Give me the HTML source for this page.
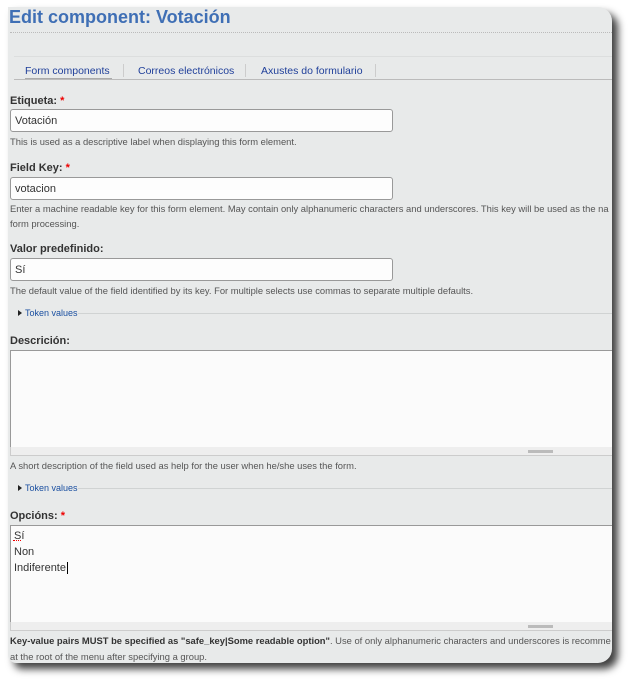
<!DOCTYPE html>
<html><head><style>
body{margin:0;width:635px;height:687px;background:#fff;position:relative;overflow:hidden;font-family:"Liberation Sans",sans-serif;}
#p{position:absolute;left:8px;top:7px;width:604px;height:656px;background:#e8eaea;border-radius:0 14px 14px 8px;box-shadow:6px 6px 8px rgba(0,0,0,.75);overflow:hidden;}
.a{position:absolute;white-space:nowrap;}
.t{font-size:18px;font-weight:bold;color:#3f6fb5;left:1px;top:0px;}
.lb{font-size:11px;font-weight:bold;color:#333;left:2px;}
.lb b{color:#e00;}
.h{font-size:9.4px;color:#555;left:2px;}
.in{left:2px;background:#fdfdfd;border:1px solid #999;border-radius:3px;font-size:11px;color:#333;line-height:23px;padding-left:4px;box-sizing:border-box;width:383px;height:23px;}
.ta{left:2px;width:610px;background:#fbfbfb;border:1px solid #999;box-sizing:border-box;}
.gr{left:2px;width:610px;height:9px;background:#eee;border:1px solid #ccc;border-top:none;box-sizing:border-box;}
.gr i{position:absolute;left:517px;top:3px;width:25px;height:3px;background:#bbb;}
.tk{font-size:9px;color:#1a4fa0;left:10px;}
.tk:before{content:"";display:inline-block;border-left:4px solid #222;border-top:3.5px solid transparent;border-bottom:3.5px solid transparent;margin-right:3px;}
.ln{height:1px;background:#d0d3d3;}
.tab{font-size:10.5px;color:#1f3f9a;top:58px;}
</style></head><body>
<div id="p">
<div class="a t">Edit component: Votación</div>
<div class="a" style="left:2px;top:25px;width:604px;border-top:1px dotted #bbb"></div>
<div class="a ln" style="left:6px;top:49px;width:600px;background:#dcdede"></div>
<div class="a tab" style="left:17px">Form components</div>
<div class="a" style="left:17px;top:71px;width:87px;height:2px;background:#aaa"></div>
<div class="a" style="left:115px;top:57px;width:1px;height:13px;background:#ccc"></div>
<div class="a tab" style="left:130px">Correos electrónicos</div>
<div class="a" style="left:237px;top:57px;width:1px;height:13px;background:#ccc"></div>
<div class="a tab" style="left:253px">Axustes do formulario</div>
<div class="a" style="left:367px;top:57px;width:1px;height:13px;background:#ccc"></div>
<div class="a" style="left:6px;top:72px;width:600px;height:1px;background:#bbb"></div>

<div class="a lb" style="top:88px">Etiqueta: <b>*</b></div>
<div class="a in" style="top:102px">Votación</div>
<div class="a h" style="top:129px">This is used as a descriptive label when displaying this form element.</div>

<div class="a lb" style="top:155px">Field Key: <b>*</b></div>
<div class="a in" style="top:170px">votacion</div>
<div class="a h" style="top:196px">Enter a machine readable key for this form element. May contain only alphanumeric characters and underscores. This key will be used as the na</div>
<div class="a h" style="top:211px">form processing.</div>

<div class="a lb" style="top:236px">Valor predefinido:</div>
<div class="a in" style="top:251px">Sí</div>
<div class="a h" style="top:278px">The default value of the field identified by its key. For multiple selects use commas to separate multiple defaults.</div>

<div class="a tk" style="top:301px">Token values</div>
<div class="a ln" style="left:70px;top:306px;width:540px"></div>

<div class="a lb" style="top:328px">Descrición:</div>
<div class="a ta" style="top:343px;height:98px"></div>
<div class="a gr" style="top:440px"><i></i></div>
<div class="a h" style="top:453px">A short description of the field used as help for the user when he/she uses the form.</div>

<div class="a tk" style="top:476px">Token values</div>
<div class="a ln" style="left:70px;top:481px;width:540px"></div>

<div class="a lb" style="top:503px">Opcións: <b>*</b></div>
<div class="a ta" style="top:518px;height:98px;font-size:11px;color:#333;line-height:16px;padding:2px 0 0 3px">Sí<br>Non<br>Indiferente<span style="border-left:1px solid #000;margin-left:1px"></span></div>
<div class="a" style="left:5px;top:531px;width:8px;height:2px;border-bottom:1px dotted #e00"></div>
<div class="a gr" style="top:615px"><i></i></div>
<div class="a h" style="top:628px"><b style="color:#333">Key-value pairs MUST be specified as "safe_key|Some readable option"</b>. Use of only alphanumeric characters and underscores is recomme</div>
<div class="a h" style="top:644px">at the root of the menu after specifying a group.</div>
</div>
</body></html>
